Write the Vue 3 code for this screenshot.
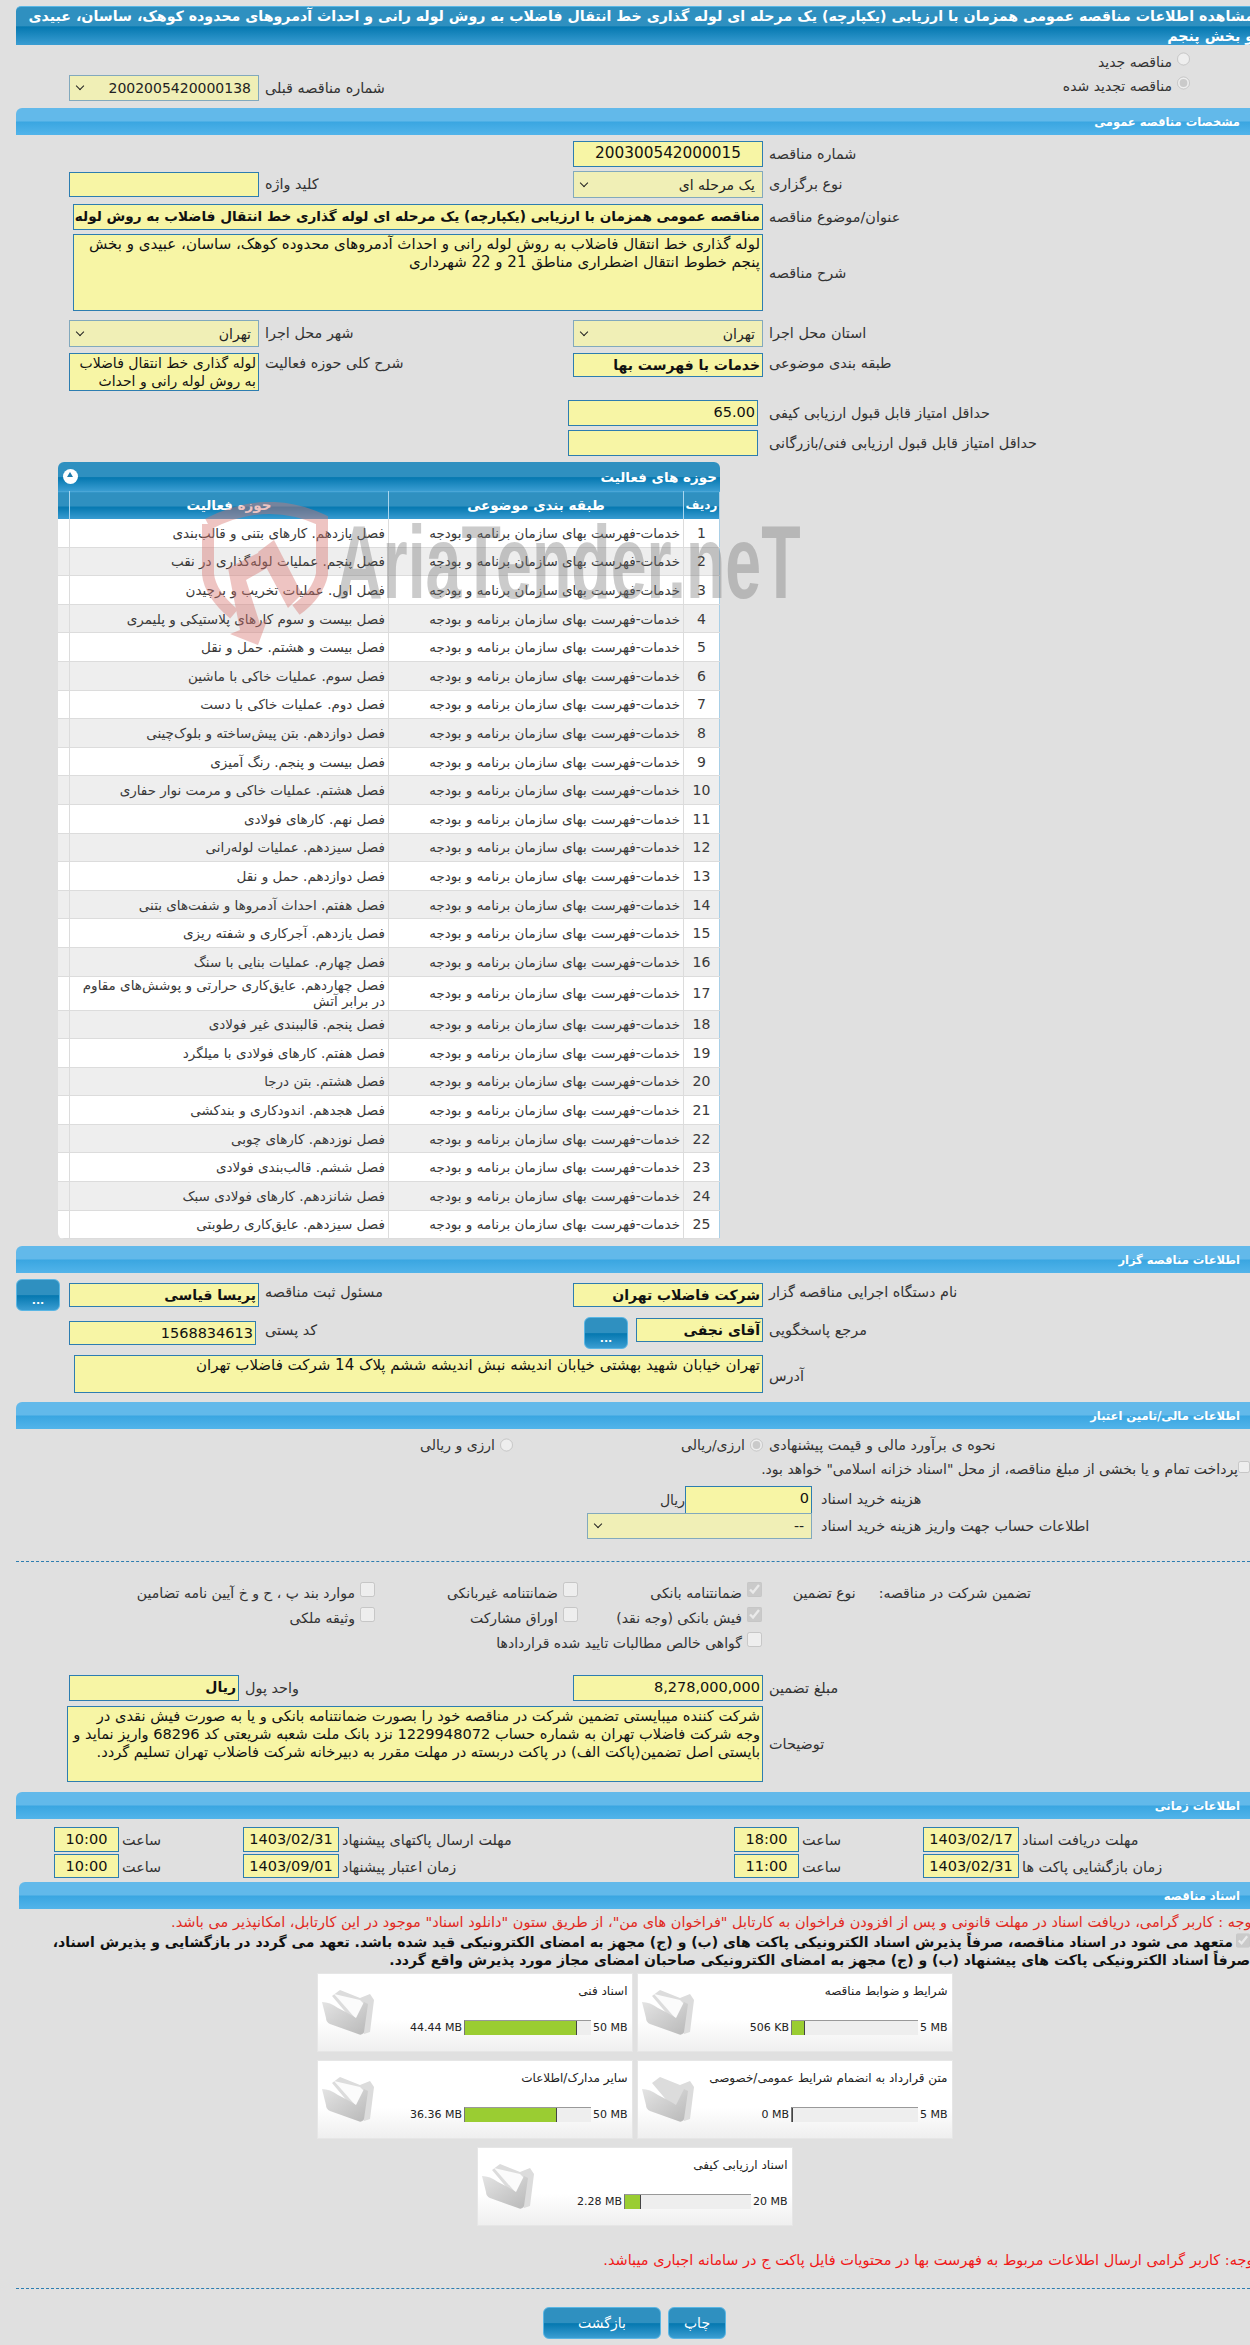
<script setup>
const activities = [
  'فصل یازدهم. کارهای بتنی و قالب‌بندی',
  'فصل پنجم. عملیات لوله‌گذاری در نقب',
  'فصل اول. عملیات تخریب و برچیدن',
  'فصل بیست و سوم کارهای پلاستیکی و پلیمری',
  'فصل بیست و هشتم. حمل و نقل',
  'فصل سوم. عملیات خاکی با ماشین',
  'فصل دوم. عملیات خاکی با دست',
  'فصل دوازدهم. بتن پیش‌ساخته و بلوک‌چینی',
  'فصل بیست و پنجم. رنگ آمیزی',
  'فصل هشتم. عملیات خاکی و مرمت نوار حفاری',
  'فصل نهم. کارهای فولادی',
  'فصل سیزدهم. عملیات لوله‌رانی',
  'فصل دوازدهم. حمل و نقل',
  'فصل هفتم. احداث آدمروها و شفت‌های بتنی',
  'فصل یازدهم. آجرکاری و شفته ریزی',
  'فصل چهارم. عملیات بنایی با سنگ',
  'فصل چهاردهم. عایق‌کاری حرارتی و پوشش‌های مقاوم در برابر آتش',
  'فصل پنجم. قالببندی غیر فولادی',
  'فصل هفتم. کارهای فولادی با میلگرد',
  'فصل هشتم. بتن درجا',
  'فصل هجدهم. اندودکاری و بندکشی',
  'فصل نوزدهم. کارهای چوبی',
  'فصل ششم. قالب‌بندی فولادی',
  'فصل شانزدهم. کارهای فولادی سبک',
  'فصل سیزدهم. عایق‌کاری رطوبتی'
]
const docRows = [
  [
    { title: 'شرایط و ضوابط مناقصه', used: '506 KB', max: '5 MB', pct: 10 },
    { title: 'اسناد فنی', used: '44.44 MB', max: '50 MB', pct: 89 }
  ],
  [
    { title: 'متن قرارداد به انضمام شرایط عمومی/خصوصی', used: '0 MB', max: '5 MB', pct: 0 },
    { title: 'سایر مدارک/اطلاعات', used: '36.36 MB', max: '50 MB', pct: 73 }
  ],
  [{ title: 'اسناد ارزیابی کیفی', used: '2.28 MB', max: '20 MB', pct: 13 }]
]
</script>

<template>
  <div class="page">
    <h1 class="title">مشاهده اطلاعات مناقصه عمومی همزمان با ارزیابی (یکپارچه) یک مرحله ای لوله گذاری خط انتقال فاضلاب به روش لوله رانی و احداث آدمروهای محدوده کوهک، ساسان، عبیدی و بخش پنجم</h1>

    <div class="mode-row first">
      <label class="choice"><input type="radio" disabled /><span>مناقصه جدید</span></label>
    </div>
    <div class="mode-row second">
      <label class="choice"><input type="radio" disabled checked /><span>مناقصه تجدید شده</span></label>
      <div class="prev">
        <span class="lbl">شماره مناقصه قبلی</span>
        <div class="sel num-sel"><span>2002005420000138</span><i class="arrow"></i></div>
      </div>
    </div>

    <h2 class="sec">مشخصات مناقصه عمومی</h2>

    <div class="row h24 mt6">
      <span class="lbl">شماره مناقصه</span>
      <div class="inp center">200300542000015</div>
    </div>
    <div class="row h27 mt6">
      <span class="lbl">نوع برگزاری</span>
      <div class="sel"><span>یک مرحله ای</span><i class="arrow"></i></div>
      <span class="lbl">کلید واژه</span>
      <div class="inp keyword"></div>
    </div>
    <div class="row h24 mt6">
      <span class="lbl">عنوان/موضوع مناقصه</span>
      <div class="inp wide bold clip">مناقصه عمومی همزمان با ارزیابی (یکپارچه) یک مرحله ای لوله گذاری خط انتقال فاضلاب به روش لوله</div>
    </div>
    <div class="row h77 mt6">
      <span class="lbl mid">شرح مناقصه</span>
      <div class="inp wide area">لوله گذاری خط انتقال فاضلاب  به روش لوله رانی و احداث آدمروهای محدوده کوهک، ساسان، عبیدی و بخش پنجم خطوط انتقال اضطراری مناطق  21 و 22 شهرداری</div>
    </div>
    <div class="row h27 mt9">
      <span class="lbl">استان محل اجرا</span>
      <div class="sel"><span>تهران</span><i class="arrow"></i></div>
      <span class="lbl">شهر محل اجرا</span>
      <div class="sel"><span>تهران</span><i class="arrow"></i></div>
    </div>
    <div class="row h38 mt6">
      <span class="lbl top">طبقه بندی موضوعی</span>
      <div class="inp bold short">خدمات با فهرست بها</div>
      <span class="lbl top">شرح کلی حوزه فعالیت</span>
      <div class="inp area tall">لوله گذاری خط انتقال فاضلاب به روش لوله رانی و احداث</div>
    </div>
    <div class="row score h24 mt9">
      <span class="lbl">حداقل امتیاز قابل قبول ارزیابی کیفی</span>
      <div class="inp">65.00</div>
    </div>
    <div class="row score h25 mt6">
      <span class="lbl">حداقل امتیاز قابل قبول ارزیابی فنی/بازرگانی</span>
      <div class="inp"></div>
    </div>

    <div class="activity">
      <div class="panel">
        <div class="panel-head">
          <span>حوزه های فعالیت</span>
          <i class="collapse"></i>
        </div>
        <table class="grid">
          <colgroup>
            <col class="c-num" /><col class="c-cat" /><col class="c-act" /><col class="c-pad" />
          </colgroup>
          <thead>
            <tr><th>ردیف</th><th>طبقه بندی موضوعی</th><th>حوزه فعالیت</th><th></th></tr>
          </thead>
          <tbody>
            <tr v-for="(a, i) in activities" :key="i" :class="{ alt: i % 2 === 1, rowtall: i === 16 }">
              <td class="n">{{ i + 1 }}</td>
              <td>خدمات-فهرست بهای سازمان برنامه و بودجه</td>
              <td>{{ a }}</td>
              <td></td>
            </tr>
          </tbody>
        </table>
      </div>
      <div class="watermark" aria-hidden="true">
        <svg class="shield" viewBox="0 0 130 145" width="130" height="145">
          <path d="M8 22 Q66 -8 122 18 L122 72 Q118 92 96 108" fill="none" stroke="#d8756f" stroke-width="12" />
          <path d="M8 22 L8 72 Q10 92 34 112" fill="none" stroke="#d8756f" stroke-width="12" />
          <path d="M58 50 L74 38 L102 92 L88 106 Z" fill="#d8756f" />
          <path d="M28 66 L64 48 L74 62 L46 78 L60 122 L68 116 L58 143 L30 132 L40 128 Z" fill="#d8756f" />
        </svg>
        <span class="wm-text">AriaTender.neT</span>
      </div>
    </div>

    <h2 class="sec mt7">اطلاعات مناقصه گزار</h2>

    <div class="row org h32 mt6">
      <span class="lbl">نام دستگاه اجرایی مناقصه گزار</span>
      <div class="inp bold in24">شرکت فاضلاب تهران</div>
      <span class="lbl">مسئول ثبت مناقصه</span>
      <div class="inp bold in24">پریسا  قیاسی</div>
      <button class="more side">...</button>
    </div>
    <div class="row org h32 mt6">
      <span class="lbl">مرجع پاسخگویی</span>
      <div class="pair">
        <div class="inp bold ref-inp">آقای نجفی</div>
        <button class="more">...</button>
      </div>
      <span class="lbl">کد پستی</span>
      <div class="inp in24 postal">1568834613</div>
    </div>
    <div class="row h38 mt6">
      <span class="lbl low">آدرس</span>
      <div class="inp wide area addr">تهران خیابان شهید بهشتی خیابان اندیشه نبش اندیشه ششم پلاک 14 شرکت فاضلاب تهران</div>
    </div>

    <h2 class="sec mt9">اطلاعات مالی/تامین اعتبار</h2>

    <div class="finance">
      <span class="lbl">نحوه ی برآورد مالی و قیمت پیشنهادی</span>
      <label class="choice"><input type="radio" disabled checked /><span>ارزی/ریالی</span></label>
      <label class="choice"><input type="radio" disabled /><span>ارزی و ریالی</span></label>
    </div>
    <label class="treasury"><input type="checkbox" disabled /><span>پرداخت تمام و یا بخشی از مبلغ مناقصه، از محل "اسناد خزانه اسلامی" خواهد بود.</span></label>
    <div class="row fee">
      <span class="lbl">هزینه خرید اسناد</span>
      <div class="inp">0</div>
      <span class="rial">ریال</span>
    </div>
    <div class="row fee acct">
      <span class="lbl">اطلاعات حساب جهت واریز هزینه خرید اسناد</span>
      <div class="sel acct-sel"><span>--</span><i class="arrow"></i></div>
    </div>

    <hr class="dash d1" />

    <div class="guarantee">
      <div class="g-head">
        <span>تضمین شرکت در مناقصه:</span>
        <span>نوع تضمین</span>
      </div>
      <div class="g-grid">
        <label class="chk"><input type="checkbox" disabled checked /><span>ضمانتنامه بانکی</span></label>
        <label class="chk"><input type="checkbox" disabled /><span>ضمانتنامه غیربانکی</span></label>
        <label class="chk"><input type="checkbox" disabled /><span>موارد بند پ ، ح و خ آیین نامه تضامین</span></label>
        <label class="chk"><input type="checkbox" disabled checked /><span>فیش بانکی (وجه نقد)</span></label>
        <label class="chk"><input type="checkbox" disabled /><span>اوراق مشارکت</span></label>
        <label class="chk"><input type="checkbox" disabled /><span>وثیقه ملکی</span></label>
        <label class="chk span3"><input type="checkbox" disabled /><span>گواهی خالص مطالبات تایید شده قراردادها</span></label>
      </div>
    </div>

    <div class="row amount h25">
      <span class="lbl">مبلغ تضمین</span>
      <div class="inp">8,278,000,000</div>
      <span class="lbl">واحد پول</span>
      <div class="inp bold">ریال</div>
    </div>
    <div class="row h76 mt6">
      <span class="lbl mid">توضیحات</span>
      <div class="inp wide area desc">شرکت کننده میبایستی تضمین شرکت در مناقصه خود را بصورت ضمانتنامه بانکی و یا به صورت فیش نقدی در وجه شرکت فاضلاب تهران به شماره حساب 1229948072 نزد بانک ملت شعبه شریعتی کد 68296 واریز نماید و بایستی اصل تضمین(پاکت الف) در پاکت دربسته در مهلت مقرر به دبیرخانه شرکت فاضلاب تهران تسلیم گردد.</div>
    </div>

    <h2 class="sec mt10">اطلاعات زمانی</h2>

    <div class="dates">
      <span class="lbl">مهلت دریافت اسناد</span>
      <div class="inp date">1403/02/17</div>
      <span class="lbl">ساعت</span>
      <div class="inp time">18:00</div>
      <span class="lbl">مهلت ارسال پاکتهای پیشنهاد</span>
      <div class="inp date">1403/02/31</div>
      <span class="lbl">ساعت</span>
      <div class="inp time">10:00</div>

      <span class="lbl">زمان بازگشایی پاکت ها</span>
      <div class="inp date">1403/02/31</div>
      <span class="lbl">ساعت</span>
      <div class="inp time">11:00</div>
      <span class="lbl">زمان اعتبار پیشنهاد</span>
      <div class="inp date">1403/09/01</div>
      <span class="lbl">ساعت</span>
      <div class="inp time">10:00</div>
    </div>

    <h2 class="sec docs-sec">اسناد مناقصه</h2>

    <p class="notice">توجه : کاربر گرامی، دریافت اسناد در مهلت قانونی و پس از افزودن فراخوان به کارتابل "فراخوان های من"، از طریق ستون "دانلود اسناد" موجود در این کارتابل، امکانپذیر می باشد.</p>
    <p class="pledge"><input type="checkbox" disabled checked /><span>متعهد می شود در اسناد مناقصه، صرفاً پذیرش اسناد الکترونیکی پاکت های (ب) و (ج) مجهز به امضای الکترونیکی قید شده باشد. تعهد می گردد در بازگشایی و پذیرش اسناد، صرفاً اسناد الکترونیکی پاکت های پیشنهاد (ب) و (ج) مجهز به امضای الکترونیکی صاحبان امضای مجاز مورد پذیرش واقع گردد.</span></p>

    <div class="cards">
      <div v-for="(r, ri) in docRows" :key="ri" class="card-row">
        <div v-for="d in r" :key="d.title" class="card">
          <div class="card-body">
            <div class="card-title">{{ d.title }}</div>
            <div class="meter">
              <span class="amt">{{ d.max }}</span>
              <div class="track"><div class="bar" :style="{ width: d.pct + '%' }"></div></div>
              <span class="amt">{{ d.used }}</span>
            </div>
          </div>
          <svg class="folder" viewBox="0 0 56 48" width="56" height="48">
            <defs>
              <linearGradient id="fg" x1="0" y1="0" x2="1" y2="1"><stop offset="0" stop-color="#e4e4e4" /><stop offset="1" stop-color="#b8b8b8" /></linearGradient>
            </defs>
            <path d="M12 8 L20 2 L40 10 L50 6 L54 12 L50 44 L44 46 Z" fill="#dcdcdc" />
            <path v-if="d.pct > 0" d="M14 6 L40 12 L46 18 L44 40 Z" fill="#fbfbfb" />
            <path d="M2 14 Q10 14 18 20 Q30 26 36 30 L44 14 L48 16 L44 44 Q42 48 38 46 L10 36 Q6 34 6 30 Z" fill="url(#fg)" />
          </svg>
        </div>
      </div>
    </div>

    <p class="bottom-note">توجه: کاربر گرامی ارسال اطلاعات مربوط به فهرست بها در محتویات فایل پاکت ج در سامانه اجباری میباشد.</p>

    <hr class="dash d2" />

    <div class="actions">
      <button class="btn print">چاپ</button>
      <button class="btn back">بازگشت</button>
    </div>
  </div>
</template>

<style>
html, body { margin: 0; background: #e0e0e0; }
</style>

<style scoped>
* { box-sizing: border-box; }
.page {
  width: 1250px;
  height: 2345px;
  overflow: hidden;
  direction: rtl;
  background: #e0e0e0;
  font-family: "DejaVu Sans", Tahoma, sans-serif;
  font-size: 14px;
  color: #222;
  padding-top: 6px;
}
.title {
  margin: 0 -4px 0 0;
  margin-left: 16px;
  height: 39px;
  font-size: 14.2px;
  line-height: 19.5px;
  font-weight: bold;
  color: #fff;
  background: linear-gradient(#2f90c0 0, #2f90c0 50%, #0578b0 52%, #3a9dd2 100%);
  border-top: 1px solid #5ab6e4;
  border-radius: 5px 0 0 0;
  overflow: hidden;
}
.mode-row { display: flex; margin-left: 69px; }
.mode-row.first { height: 24px; margin-top: 6px; }
.mode-row.second { height: 26px; justify-content: space-between; }
.choice { display: flex; align-items: center; gap: 5px; color: #333; white-space: nowrap; }
.choice input { margin: 0; width: 13px; height: 14px; flex: none; }
.mode-row .choice { margin-right: 60px; align-items: flex-start; line-height: 22px; }
.mode-row .choice input { margin-top: 1px; }
.prev { display: flex; align-items: center; gap: 6px; }
.num-sel { width: 190px; height: 26px; }

.sec {
  margin: 7px 0 0 16px;
  height: 27px;
  padding: 5px 10px 0 0;
  font-size: 11.5px;
  line-height: 18px;
  font-weight: bold;
  color: #fff;
  background: linear-gradient(#62b9ea 0, #62b9ea 48%, #3aa6e1 52%, #52b4ea 100%);
  border-radius: 6px 0 0 0;
}
.mt6 { margin-top: 6px; }
.mt7 { margin-top: 7px; }
.mt9 { margin-top: 9px; }
.mt10 { margin-top: 10px; }

.row {
  display: grid;
  grid-template-columns: 487px 190px 314px 190px;
  align-items: start;
}
.row > .lbl { padding-left: 6px; }
.h24 { height: 24px; }
.h25 { height: 25px; }
.h27 { height: 27px; }
.h32 { height: 32px; }
.h38 { height: 38px; }
.h76 { height: 76px; }
.h77 { height: 77px; }
.lbl {
  text-align: left;
  line-height: 26px;
  font-size: 14.4px;
  color: #333;
  white-space: nowrap;
}
.lbl.mid { align-self: center; }
.lbl.top { line-height: 20px; }
.lbl.low { margin-top: 8px; }
.inp {
  background: #f7f5a5;
  border: 1px solid #2d7db0;
  height: 100%;
  padding: 0 2px;
  line-height: 22px;
  font-size: 14.5px;
  color: #111;
  overflow: hidden;
}
.inp.center { text-align: center; font-size: 15.3px; }
.inp.keyword { height: 25px; margin-top: 1px; }
.inp.wide { grid-column: 2 / span 3; margin-left: 4px; }
.inp.bold { font-weight: bold; font-size: 14px; }
.inp.clip { white-space: nowrap; font-size: 13.6px; }
.inp.area { font-size: 15px; line-height: 18px; }
.inp.tall { font-size: 14px; }
.inp.short { height: 24px; }
.sel {
  display: flex;
  align-items: center;
  background: #f0efb6;
  border: 1px solid #82a9bd;
  height: 100%;
  padding: 0 7px 0 0;
  position: relative;
  font-size: 14px;
  color: #222;
}
.arrow {
  position: absolute;
  left: 7px;
  top: 50%;
  margin-top: -5px;
  width: 6px;
  height: 6px;
  border-left: 1.5px solid #222;
  border-bottom: 1.5px solid #222;
  transform: rotate(-45deg);
}
.score { grid-template-columns: 492px 190px; }
.score > .lbl { padding-left: 11px; }

.activity { position: relative; margin-top: 7px; margin-right: 530px; width: 662px; }
.panel { border-radius: 6px 6px 0 6px; overflow: hidden; }
.panel-head {
  display: flex;
  justify-content: space-between;
  align-items: center;
  height: 29px;
  padding: 0 3px 0 5px;
  color: #fff;
  font-size: 13.5px;
  font-weight: bold;
  background: linear-gradient(#2f90c0 0, #2f90c0 50%, #0578b0 54%, #3a9dd2 100%);
}
.collapse {
  display: block;
  width: 15px;
  height: 15px;
  border-radius: 50%;
  background: #fff;
  position: relative;
}
.collapse::after {
  content: "";
  position: absolute;
  left: 4px;
  top: 3px;
  border-left: 3.5px solid transparent;
  border-right: 3.5px solid transparent;
  border-bottom: 5px solid #1f7cae;
}
.grid {
  width: 662px;
  table-layout: fixed;
  border-collapse: collapse;
  background: #fff;
  border-left: 1px solid #a9cfe6;
  border-right: 1px solid #a9cfe6;
  border-bottom: 1px solid #a9cfe6;
}
.c-num { width: 36px; }
.c-cat { width: 295px; }
.c-act { width: 319px; }
.c-pad { width: 12px; }
.grid th {
  height: 27px;
  padding: 0;
  color: #fff;
  font-size: 13.5px;
  font-weight: bold;
  background: linear-gradient(#2f90c0 0, #2f90c0 50%, #0578b0 54%, #3a9dd2 100%);
  border-left: 1px solid #a9d5ee;
  border-top: 1px solid #4aa6d6;
  text-align: center;
}
.grid th:first-child { font-size: 12px; }
.grid td {
  height: 28.6px;
  padding: 0 3px;
  font-size: 13.5px;
  line-height: 16px;
  color: #3a3a3a;
  border-left: 1px solid #dcdcdc;
  border-bottom: 1px solid #dcdcdc;
  text-align: right;
}
.grid td.n { text-align: center; font-size: 14px; }
.grid tr.alt td { background: #eeeeee; }
.grid tr.rowtall td { height: 34px; }

.watermark {
  position: absolute;
  left: 142px;
  top: 40px;
  width: 600px;
  height: 145px;
  direction: ltr;
  pointer-events: none;
}
.shield { position: absolute; left: 0; top: 0; opacity: .42; }
.wm-text {
  position: absolute;
  left: 136px;
  top: 4px;
  font-family: "Liberation Sans", sans-serif;
  font-weight: bold;
  font-size: 104px;
  line-height: 112px;
  color: rgba(110, 110, 110, .36);
  transform: scaleX(.62);
  transform-origin: left top;
  white-space: nowrap;
}

.org { grid-template-columns: 487px 190px 314px 190px 9px 44px; }
.in24 { height: 24px; margin-top: 4px; }
.side { grid-column: 6; }
.pair { display: flex; gap: 8px; align-items: flex-start; }
.ref-inp { width: 127px; height: 24px; flex: none; margin-top: 1px; }
.postal { width: 187px; margin-right: 3px; }
.more {
  width: 44px;
  height: 32px;
  flex: none;
  padding: 12px 0 0;
  font: bold 11px/12px "DejaVu Sans", sans-serif;
  color: #fff;
  border: 1px solid #5ab6e4;
  border-radius: 6px;
  background: linear-gradient(#2f90c0 0, #2f90c0 50%, #0578b0 52%, #3a9dd2 100%);
}
.inp.addr { margin-left: 5px; }

.finance {
  display: grid;
  grid-template-columns: 487px 250px auto;
  align-items: center;
  margin-top: 3px;
  height: 24px;
}
.finance .lbl { padding-left: 6px; }
.finance .choice { line-height: 24px; }
.treasury { display: flex; align-items: center; height: 20px; margin-top: 3px; color: #333; }
.treasury input { margin: -4px 0 0 0; width: 12px; height: 14px; flex: none; }
.fee { grid-template-columns: 438px 127px auto; height: 25px; margin-top: 7px; }
.fee > .lbl { padding-left: 9px; }
.rial { line-height: 28px; color: #333; }
.acct { margin-top: 2px; height: 26px; }
.acct-sel { grid-column: 2 / span 2; width: 225px; }

.dash { border: 0; border-top: 1px dashed #2d7db0; margin: 0 0 0 16px; }
.d1 { margin-top: 22px; }
.guarantee { display: flex; margin-top: 19px; height: 94px; }
.g-head { width: 488px; flex: none; display: flex; gap: 23px; padding-right: 219px; line-height: 24px; color: #333; white-space: nowrap; }
.g-grid {
  display: grid;
  grid-template-columns: 184px 203px 300px;
  grid-auto-rows: 25px;
}
.chk { display: flex; align-items: flex-start; gap: 5px; line-height: 24px; color: #333; white-space: nowrap; }
.chk input { margin: 1px 0 0; width: 15px; height: 15px; flex: none; }
.span3 { grid-column: 1 / span 3; }
.amount { grid-template-columns: 487px 190px 334px 170px; }
.amount > .lbl:nth-of-type(3) { padding-left: 4px; }
.inp.desc { margin-left: -2px; font-size: 14.6px; }

.dates {
  display: grid;
  grid-template-columns: 231px 96px 124px 65px 395px 96px 124px 65px;
  margin-top: 8px;
  row-gap: 2px;
  grid-auto-rows: 24.5px;
}
.dates .lbl { padding-left: 3px; }
.dates .inp { text-align: center; }
.sec.docs-sec { margin-left: 19px; margin-top: 4px; }

.notice {
  margin: 4px -6px 0 0;
  height: 18px;
  line-height: 18px;
  font-size: 14.5px;
  color: #e02a22;
  white-space: nowrap;
}
.pledge {
  margin: 2px 0 0 0;
  padding-left: 18px;
  font-weight: bold;
  line-height: 18px;
  color: #111;
  font-size: 14px;
  height: 36px;
}
.pledge input { margin: 0 0 0 3px; width: 14px; height: 15px; vertical-align: top; }
.cards { margin-top: 4px; display: flex; flex-direction: column; gap: 8px; }
.card-row { display: flex; justify-content: center; gap: 4px; margin-left: 19px; }
.card {
  width: 316px;
  height: 79px;
  display: flex;
  justify-content: space-between;
  padding: 0 4px 0 2px;
  background: linear-gradient(#fff 0, #fff 60%, #efefef 100%);
  border: 1px solid #e6e6e6;
}
.card-title { padding-top: 8px; height: 46px; line-height: 18px; font-size: 12px; color: #222; white-space: nowrap; }
.meter { display: flex; align-items: center; gap: 2px; font-size: 11px; color: #222; }
.amt { direction: ltr; unicode-bidi: isolate; white-space: nowrap; }
.track {
  width: 127px;
  height: 15px;
  background: #eee;
  border-top: 1px solid #999;
  border-left: 1px solid #777;
  direction: ltr;
}
.bar { height: 100%; background: #9acd32; border-right: 1px solid #444; }
.folder { margin-top: 14px; flex: none; }

.bottom-note {
  margin: 25px -8px 0 0;
  height: 18px;
  line-height: 18px;
  font-size: 14.5px;
  color: #f01818;
  white-space: nowrap;
}
.d2 { margin-top: 19px; }
.actions { display: flex; justify-content: center; gap: 7px; margin-top: 18px; margin-left: 19px; }
.btn {
  height: 32px;
  font: 14px "DejaVu Sans", sans-serif;
  color: #fff;
  border: 1px solid #5ab6e4;
  border-radius: 6px;
  background: linear-gradient(#2f90c0 0, #2f90c0 50%, #0578b0 52%, #3a9dd2 100%);
}
.print { width: 58px; }
.back { width: 118px; }
</style>
